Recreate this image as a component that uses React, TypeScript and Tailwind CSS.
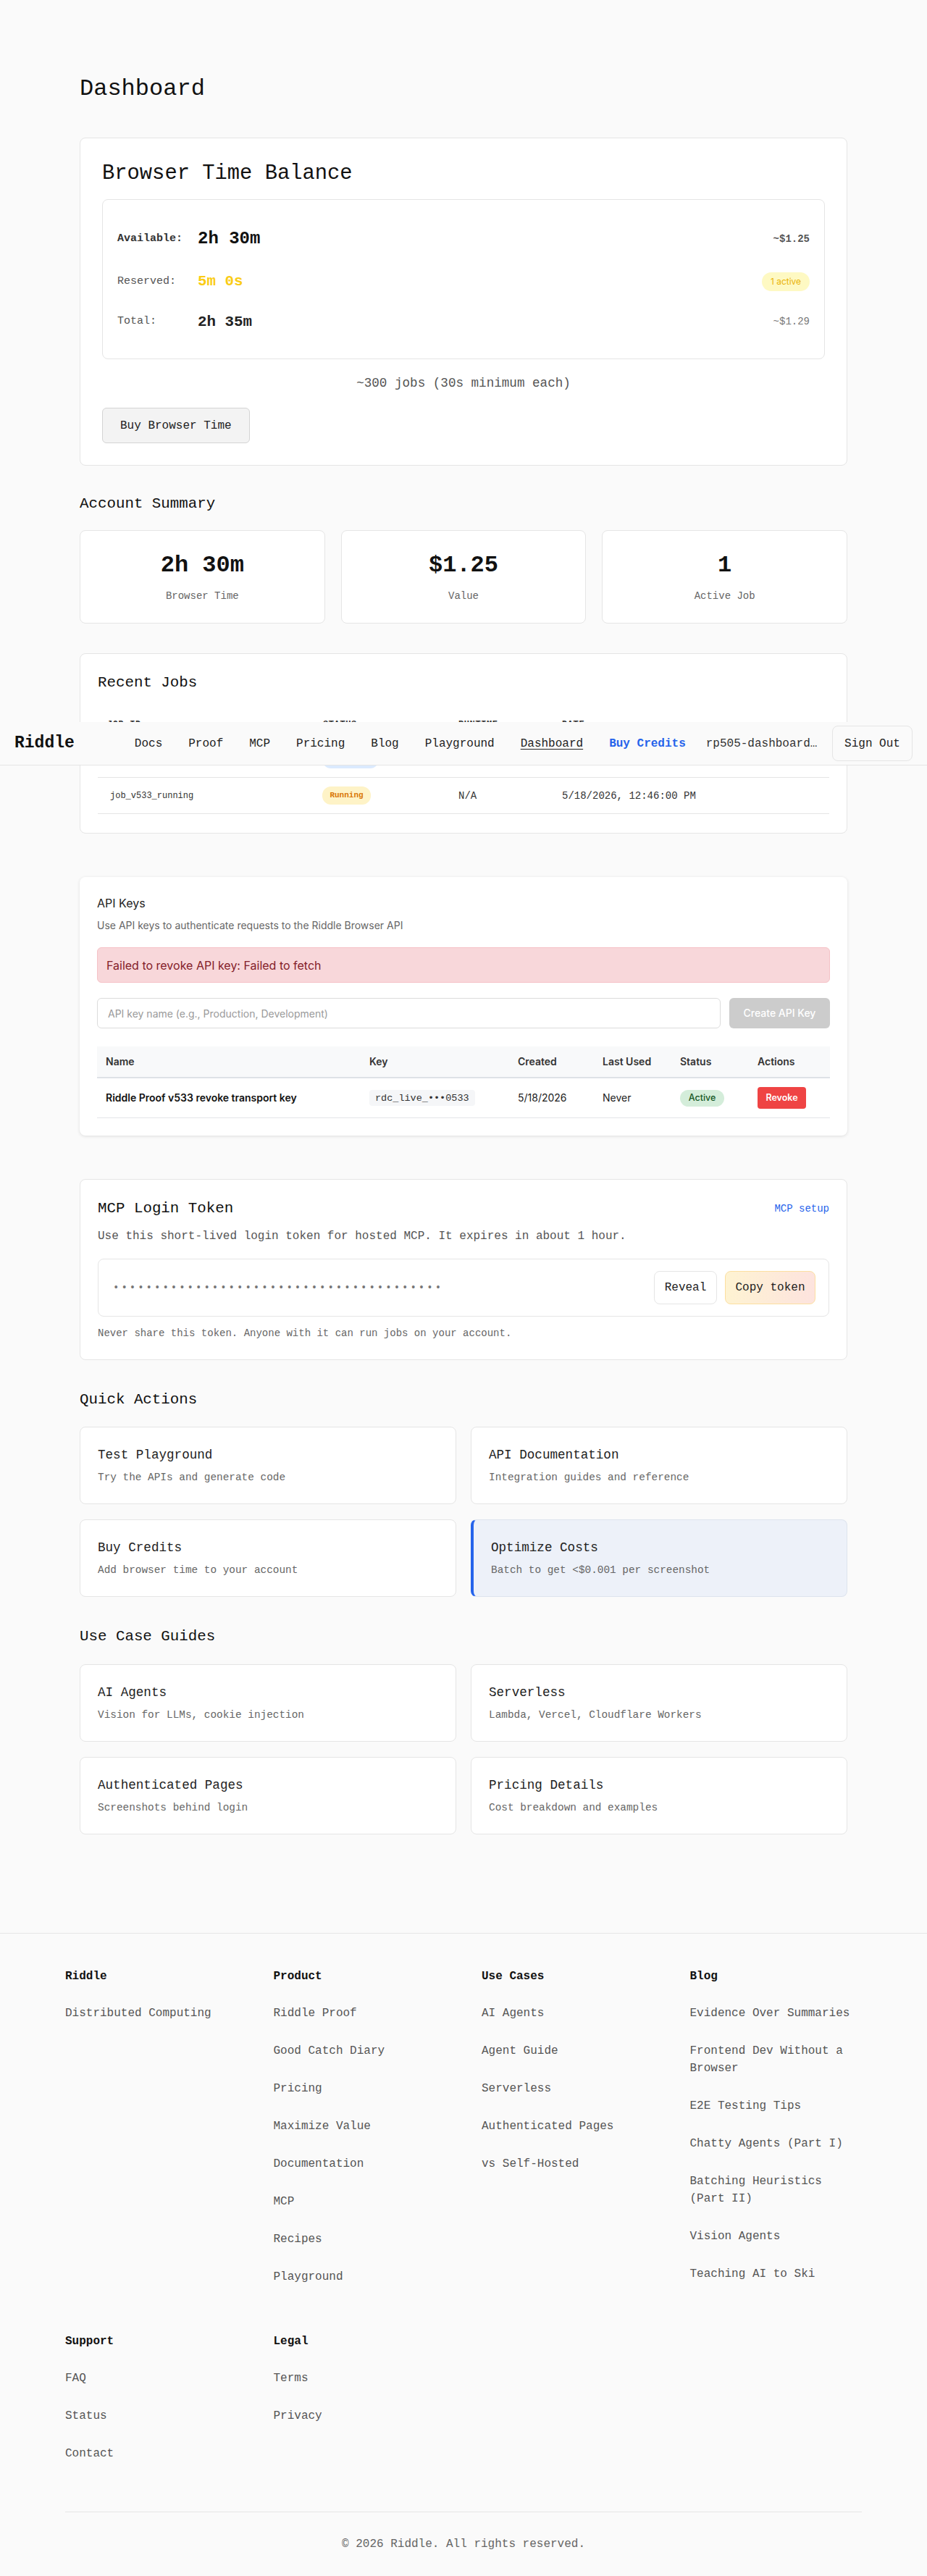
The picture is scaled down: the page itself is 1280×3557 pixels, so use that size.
import React from "react";

function Nav() {
  const links = ["Docs", "Proof", "MCP", "Pricing", "Blog", "Playground"];
  return (
    <nav className="absolute left-0 right-0 top-[997px] z-10 flex h-[60px] items-center border-b border-[#e5e5e5] bg-[#fafafa] px-5">
      <span className="text-[23px] font-bold leading-none text-[#111]">Riddle</span>
      <div className="ml-[83px] flex items-center gap-[36px] text-base text-[#222]">
        {links.map((l) => (
          <a key={l}>{l}</a>
        ))}
        <a className="underline underline-offset-[3px]">Dashboard</a>
        <a className="font-bold text-[#2563eb]">Buy Credits</a>
      </div>
      <span className="ml-[28px] w-[153px] whitespace-nowrap text-base text-[#333]">rp505-dashboard…</span>
      <button className="ml-auto h-[49px] w-[111px] rounded-lg border border-[#e5e5e5] bg-[#fafafa] text-base text-[#222]">
        Sign Out
      </button>
    </nav>
  );
}

function BalanceCard() {
  return (
    <section className="mt-[47px] rounded-lg border border-[#e5e5e5] bg-white p-[30px]">
      <h2 className="text-[28.8px] leading-[38px] text-[#111]">Browser Time Balance</h2>
      <div className="mt-4 rounded-lg border border-[#e5e5e5] bg-white p-5">
        <div className="flex h-[68px] items-center">
          <span className="w-[111px] text-[15px] font-semibold text-[#333]">Available:</span>
          <span className="text-[24px] font-bold text-[#111]">2h 30m</span>
          <span className="ml-auto text-[14px] font-semibold text-[#555]">~$1.25</span>
        </div>
        <div className="flex h-[50px] items-center">
          <span className="w-[111px] text-[15px] text-[#555]">Reserved:</span>
          <span className="text-[20.8px] font-bold text-[#facc15]">5m 0s</span>
          <span className="ml-auto flex h-[26px] w-[66px] items-center justify-center rounded-full bg-[#fef9c3] font-['Inter',sans-serif] text-[12px] text-[#eab308]">
            1 active
          </span>
        </div>
        <div className="flex h-[61px] items-center">
          <span className="w-[111px] text-[15px] text-[#555]">Total:</span>
          <span className="text-[20.8px] font-bold text-[#222]">2h 35m</span>
          <span className="ml-auto text-[14px] text-[#777]">~$1.29</span>
        </div>
      </div>
      <p className="mt-[21px] text-center text-[17.6px] leading-6 text-[#555]">~300 jobs (30s minimum each)</p>
      <button className="mt-[22px] block h-[49px] rounded-md border border-[#d4d4d4] bg-[#f3f3f3] px-6 text-base text-[#222]">
        Buy Browser Time
      </button>
    </section>
  );
}

function StatCard({ value, label }: { value: string; label: string }) {
  return (
    <div className="rounded-lg border border-[#e5e5e5] bg-white py-[29px] text-center">
      <div className="mb-4 text-[32px] font-bold leading-[37px] text-[#111]">{value}</div>
      <div className="text-sm leading-4 text-[#666]">{label}</div>
    </div>
  );
}

function RecentJobs() {
  const cols = "grid grid-cols-[298px_187px_143px_1fr] items-center";
  return (
    <section className="mt-[41px] rounded-lg border border-[#e5e5e5] bg-white px-6 pt-6 pb-[26px]">
      <h2 className="text-[20.8px] leading-8 text-[#111]">Recent Jobs</h2>
      <div className="mt-5">
        <div className={`${cols} h-[45px] border-b border-[#e5e5e5] text-xs font-bold tracking-[0.05em] text-[#333]`}>
          <span className="pl-[13px]">JOB ID</span>
          <span className="pl-[13px]">STATUS</span>
          <span className="pl-[13px]">RUNTIME</span>
          <span className="pl-[13px]">DATE</span>
        </div>
        <div className={`${cols} h-[50px] border-b border-[#e5e5e5] text-sm text-[#333]`}>
          <span className="pl-[17px] text-xs">job_v533_completed</span>
          <span className="pl-[12px]">
            <span className="inline-flex h-[25px] w-[78px] items-center justify-center rounded-xl bg-[#dbeafe] text-[11px] font-bold text-[#2563eb]">
              Completed
            </span>
          </span>
          <span className="pl-[13px]">12s</span>
          <span className="pl-[13px]">5/18/2026, 12:40:00 PM</span>
        </div>
        <div className={`${cols} h-[50px] border-b border-[#e5e5e5] text-sm text-[#333]`}>
          <span className="pl-[17px] text-xs">job_v533_running</span>
          <span className="pl-[12px]">
            <span className="inline-flex h-[25px] w-[67px] items-center justify-center rounded-xl bg-[#fef3c7] text-[11px] font-bold text-[#d97706]">
              Running
            </span>
          </span>
          <span className="pl-[13px]">N/A</span>
          <span className="pl-[13px]">5/18/2026, 12:46:00 PM</span>
        </div>
      </div>
    </section>
  );
}

function ApiKeys() {
  const cols = "grid grid-cols-[364px_205px_117px_107px_107px_1fr] items-center";
  return (
    <section className="mt-[60px] rounded-lg bg-white p-6 font-['Inter',sans-serif] shadow-[0_1px_4px_rgba(0,0,0,0.12)]">
      <h3 className="text-base leading-6 text-[#222]">API Keys</h3>
      <p className="mt-[9px] text-sm leading-5 text-[#666]">
        Use API keys to authenticate requests to the Riddle Browser API
      </p>
      <div className="mt-5 flex h-[49px] items-center rounded-md border border-[#f5c2c7] bg-[#f8d7da] px-3 text-base text-[#842029]">
        Failed to revoke API key: Failed to fetch
      </div>
      <div className="mt-[21px] flex h-[42px] gap-3">
        <input
          className="h-full flex-1 rounded-md border border-[#dcdcdc] bg-white px-[14px] text-sm text-[#222] outline-none placeholder:text-[#9a9a9a]"
          placeholder="API key name (e.g., Production, Development)"
        />
        <button className="h-full w-[139px] rounded-md bg-[#cccccc] text-sm font-medium text-white">Create API Key</button>
      </div>
      <div className="mt-[25px]">
        <div className={`${cols} h-[44px] border-b-2 border-[#dee2e6] bg-[#f8f9fa] text-sm font-semibold text-[#333]`}>
          <span className="px-3">Name</span>
          <span className="px-3">Key</span>
          <span className="px-3">Created</span>
          <span className="px-3">Last Used</span>
          <span className="px-3">Status</span>
          <span className="px-3">Actions</span>
        </div>
        <div className={`${cols} h-[55px] border-b border-[#e3e5e8] text-sm text-[#222]`}>
          <span className="px-3 font-semibold text-[#111]">Riddle Proof v533 revoke transport key</span>
          <span className="px-3">
            <code className="inline-flex h-[22px] items-center rounded bg-[#f5f6f8] px-2 font-['Liberation_Mono',monospace] text-[13.5px] text-[#333]">
              rdc_live_•••0533
            </code>
          </span>
          <span className="px-3">5/18/2026</span>
          <span className="px-3">Never</span>
          <span className="px-3">
            <span className="inline-flex h-[23px] w-[61px] items-center justify-center rounded-full bg-[#d4edda] text-[12.5px] font-medium text-[#155724]">
              Active
            </span>
          </span>
          <span className="px-3">
            <button className="h-[30px] w-[67px] rounded bg-[#ef4444] text-[12.5px] font-semibold text-white">Revoke</button>
          </span>
        </div>
      </div>
    </section>
  );
}

function McpToken() {
  return (
    <section className="mt-[60px] rounded-lg border border-[#e5e5e5] bg-white px-6 pt-6 pb-[26px]">
      <div className="flex h-8 items-center justify-between">
        <h2 className="text-[20.8px] leading-8 text-[#111]">MCP Login Token</h2>
        <a className="text-sm text-[#2563eb]">MCP setup</a>
      </div>
      <p className="mt-[10px] text-base leading-6 text-[#555]">
        Use this short-lived login token for hosted MCP. It expires in about 1 hour.
      </p>
      <div className="mt-[19px] flex h-[80px] items-center rounded-lg border border-[#e5e5e5] pl-5 pr-[18px]">
        <span className="text-[14px] tracking-[3px] text-[#777]">{"•".repeat(40)}</span>
        <button className="ml-auto h-[46px] w-[87px] rounded-lg border border-[#e5e5e5] bg-white text-base text-[#222]">Reveal</button>
        <button className="ml-[11px] h-[46px] w-[125px] rounded-lg border border-[#fcdfa0] bg-gradient-to-r from-[#fef3d2] to-[#fde3de] text-base text-[#222]">
          Copy token
        </button>
      </div>
      <p className="mt-[13px] text-sm leading-5 text-[#666]">
        Never share this token. Anyone with it can run jobs on your account.
      </p>
    </section>
  );
}

function LinkCard({ title, desc, highlight }: { title: string; desc: string; highlight?: boolean }) {
  return (
    <div
      className={
        highlight
          ? "rounded-lg border border-l-4 border-[#dde3ee] border-l-[#2563eb] bg-[#edf1f9] px-6 py-[28px]"
          : "rounded-lg border border-[#e5e5e5] bg-white px-6 py-[28px]"
      }
    >
      <div className="mb-[13px] text-[17.6px] leading-5 text-[#222]">{title}</div>
      <div className="text-[14.4px] leading-4 text-[#666]">{desc}</div>
    </div>
  );
}

function FooterCol({ title, items }: { title: string; items: string[] }) {
  return (
    <div>
      <div className="mb-[27px] text-base font-bold leading-6 text-[#111]">{title}</div>
      <ul className="flex flex-col gap-[28px] text-base leading-6 text-[#555]">
        {items.map((i) => (
          <li key={i}>{i}</li>
        ))}
      </ul>
    </div>
  );
}

function Footer() {
  return (
    <footer className="border-t border-[#e5e5e5] bg-[#fafafa]">
      <div className="mx-auto max-w-[1100px] pt-[47px]">
        <div className="grid grid-cols-4 gap-x-[50px] gap-y-[65px]">
          <FooterCol title="Riddle" items={["Distributed Computing"]} />
          <FooterCol
            title="Product"
            items={["Riddle Proof", "Good Catch Diary", "Pricing", "Maximize Value", "Documentation", "MCP", "Recipes", "Playground"]}
          />
          <FooterCol title="Use Cases" items={["AI Agents", "Agent Guide", "Serverless", "Authenticated Pages", "vs Self-Hosted"]} />
          <FooterCol
            title="Blog"
            items={[
              "Evidence Over Summaries",
              "Frontend Dev Without a Browser",
              "E2E Testing Tips",
              "Chatty Agents (Part I)",
              "Batching Heuristics (Part II)",
              "Vision Agents",
              "Teaching AI to Ski",
            ]}
          />
          <FooterCol title="Support" items={["FAQ", "Status", "Contact"]} />
          <FooterCol title="Legal" items={["Terms", "Privacy"]} />
        </div>
        <div className="mt-[68px] border-t border-[#e5e5e5] pt-8 pb-[31px] text-center text-base leading-6 text-[#666]">
          © 2026 Riddle. All rights reserved.
        </div>
      </div>
    </footer>
  );
}

export default function App() {
  return (
    <div className="relative min-h-screen bg-[#fafafa] font-['Liberation_Mono',monospace] text-[#222]">
      <Nav />
      <main className="mx-auto max-w-[1100px] px-5 pt-[103px] pb-[136px]">
        <h1 className="text-[32px] font-normal leading-[40px] text-[#111]">Dashboard</h1>
        <BalanceCard />
        <h2 className="mt-[41px] mb-6 text-[20.8px] leading-6 text-[#111]">Account Summary</h2>
        <div className="grid grid-cols-3 gap-[22px]">
          <StatCard value="2h 30m" label="Browser Time" />
          <StatCard value="$1.25" label="Value" />
          <StatCard value="1" label="Active Job" />
        </div>
        <RecentJobs />
        <ApiKeys />
        <McpToken />
        <h2 className="mt-[43px] mb-[25px] text-[20.8px] leading-6 text-[#111]">Quick Actions</h2>
        <div className="grid grid-cols-2 gap-x-5 gap-y-[21px]">
          <LinkCard title="Test Playground" desc="Try the APIs and generate code" />
          <LinkCard title="API Documentation" desc="Integration guides and reference" />
          <LinkCard title="Buy Credits" desc="Add browser time to your account" />
          <LinkCard title="Optimize Costs" desc="Batch to get <$0.001 per screenshot" highlight />
        </div>
        <h2 className="mt-[43px] mb-[26px] text-[20.8px] leading-6 text-[#111]">Use Case Guides</h2>
        <div className="grid grid-cols-2 gap-x-5 gap-y-[21px]">
          <LinkCard title="AI Agents" desc="Vision for LLMs, cookie injection" />
          <LinkCard title="Serverless" desc="Lambda, Vercel, Cloudflare Workers" />
          <LinkCard title="Authenticated Pages" desc="Screenshots behind login" />
          <LinkCard title="Pricing Details" desc="Cost breakdown and examples" />
        </div>
      </main>
      <Footer />
    </div>
  );
}
